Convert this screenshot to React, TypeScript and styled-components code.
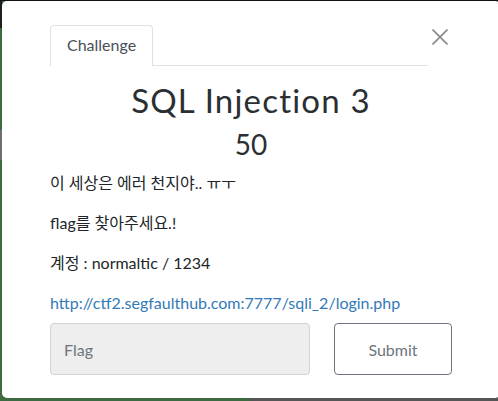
import styled, { createGlobalStyle } from "styled-components";

const GlobalStyle = createGlobalStyle`
  html, body {
    margin: 0;
    padding: 0;
    height: 401px;
    overflow: hidden;
  }
  body {
    font-family: "Lato", "Noto Sans CJK KR", sans-serif;
    color: #212529;
  }
`;

// backdrop behind the modal: bits of the page showing round the edges
const Backdrop = styled.div`
  width: 498px;
  height: 401px;
  box-sizing: border-box;
  padding: 1px 0 0 2px;
  overflow: hidden;
  background:
    linear-gradient(#111, #111) left top / 100% 1px no-repeat,
    linear-gradient(
        to bottom,
        #1e1e1e 0 28px,
        transparent 28px 130px,
        #6e6e6e 130px 160px,
        transparent 160px
      )
      left top / 2px 100% no-repeat,
    linear-gradient(to right, #3d6a41 0 250px, #555 250px);
`;

const Modal = styled.div`
  width: 498px;
  height: 397px;
  box-sizing: border-box;
  background: #fff;
  border-radius: 5px;
  padding: 24px 48px 23px;
  display: flex;
  flex-direction: column;
`;

const Header = styled.div`
  display: flex;
  align-items: flex-start;
`;

const Tabs = styled.div`
  flex: 1;
  display: flex;
  border-bottom: 1px solid #dee2e6;
`;

const Tab = styled.div<{ $active?: boolean }>`
  padding: 7px 16px 8px;
  line-height: 24px;
  font-size: 16px;
  color: #495057;
  border: 1px solid ${(p) => (p.$active ? "#dee2e6" : "transparent")};
  border-bottom: none;
  border-radius: 4px 4px 0 0;
  margin-bottom: -1px;
  background: #fff;
  height: 41px;
  box-sizing: border-box;
`;

const Close = styled.button`
  width: 24px;
  height: 24px;
  padding: 0;
  border: none;
  background: none;
  display: flex;
  align-items: center;
  justify-content: center;
  cursor: pointer;
`;

const Body = styled.div`
  display: flex;
  flex-direction: column;
`;

const Title = styled.h3`
  margin: 15px 0 0;
  font-size: 33px;
  font-weight: 400;
  line-height: 1.2;
  text-align: center;
  letter-spacing: 1.2px;
  color: #2b2f33;
`;

const Points = styled.h4`
  margin: 7px 0 10px;
  font-size: 28px;
  font-weight: 400;
  line-height: 1.2;
  text-align: center;
  color: #2b2f33;
`;

const Text = styled.p`
  margin: 0 0 16px;
  font-size: 16px;
  line-height: 24px;
`;

const Link = styled.a`
  color: #337ab7;
  text-decoration: none;
`;

const FlagForm = styled.div`
  display: grid;
  grid-template-columns: 260px 1fr;
  gap: 24px;
  margin-top: -8px;
`;

const FlagInput = styled.input`
  height: 52px;
  box-sizing: border-box;
  border: 1px solid #ced4da;
  border-radius: 4px;
  background: #eee;
  padding: 0 13px;
  font: 16px "Lato", sans-serif;
  color: #495057;
  &::placeholder {
    color: #6c757d;
  }
`;

const SubmitButton = styled.button`
  height: 52px;
  border: 1px solid #6c757d;
  border-radius: 4px;
  background: #fff;
  color: #6c757d;
  font: 16px "Lato", sans-serif;
`;

export default function App() {
  return (
    <>
      <GlobalStyle />
      <Backdrop>
        <Modal>
          <Header>
            <Tabs>
              <Tab $active>Challenge</Tab>
            </Tabs>
            <Close aria-label="Close">
              <svg width="16" height="16" viewBox="0 0 16 16">
                <path
                  d="M0.5 0.5 L15.5 15.5 M15.5 0.5 L0.5 15.5"
                  stroke="#888"
                  strokeWidth="1.6"
                  fill="none"
                />
              </svg>
            </Close>
          </Header>
          <Body>
            <Title>SQL Injection 3</Title>
            <Points>50</Points>
            <Text>이 세상은 에러 천지야.. ㅠㅜ</Text>
            <Text>flag를 찾아주세요.!</Text>
            <Text>계정 : normaltic / 1234</Text>
            <Text>
              <Link href="#">http://ctf2.segfaulthub.com:7777/sqli_2/login.php</Link>
            </Text>
            <FlagForm>
              <FlagInput placeholder="Flag" />
              <SubmitButton>Submit</SubmitButton>
            </FlagForm>
          </Body>
        </Modal>
      </Backdrop>
    </>
  );
}
